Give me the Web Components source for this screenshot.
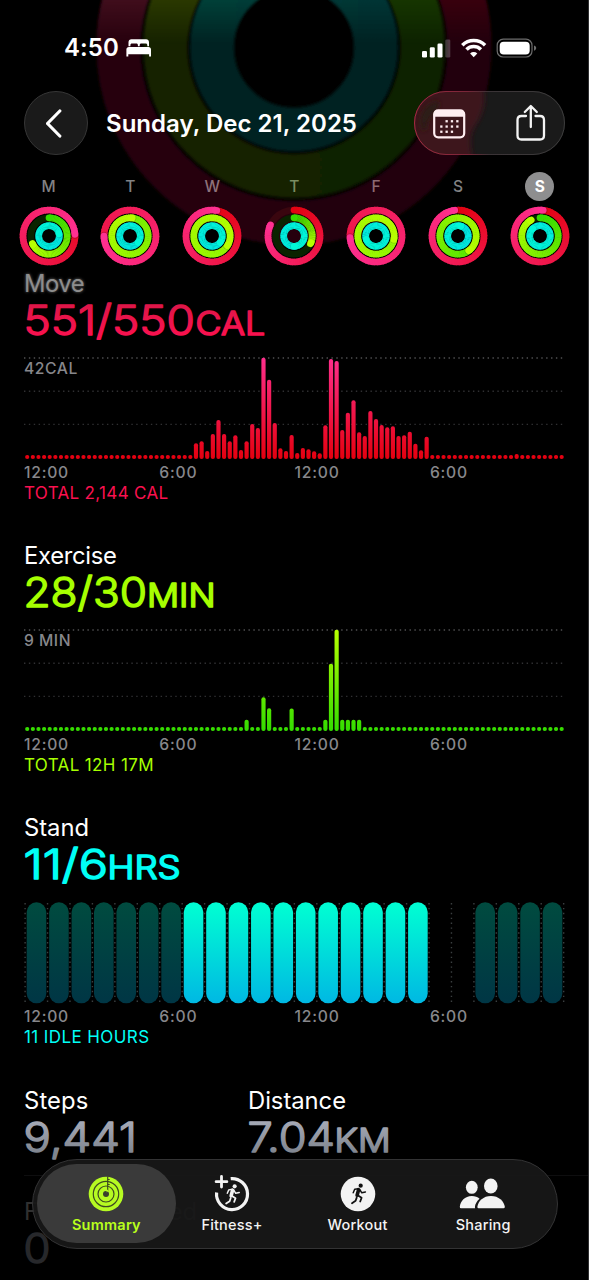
<!DOCTYPE html>
<html lang="en">
<head>
<meta charset="utf-8">
<title>Activity</title>
<style>
    body {
        margin: 0;
        background: #000;
        font-family: Inter, "Liberation Sans", sans-serif;
        color: #fff;
    }
</style>
</head>
<body>
<activity-screen>
    <hero-rings slot="backdrop"></hero-rings>
    <status-bar time="4:50"></status-bar>
    <day-header><fit-text width="251">Sunday, Dec 21, 2025</fit-text></day-header>
    <week-strip></week-strip>
    <activity-metric kind="move" label="Move" label-width="60"></activity-metric>
    <activity-metric kind="exercise" label="Exercise" label-width="92.500"></activity-metric>
    <activity-metric kind="stand" label="Stand" label-width="65"></activity-metric>
    <stat-row></stat-row>
    <tab-bar slot="overlay">
        <tab-item icon="rings" selected><fit-text width="69">Summary</fit-text></tab-item>
        <tab-item icon="plus"><fit-text width="61">Fitness+</fit-text></tab-item>
        <tab-item icon="run"><fit-text width="60">Workout</fit-text></tab-item>
        <tab-item icon="people"><fit-text width="55">Sharing</fit-text></tab-item>
    </tab-bar>
</activity-screen>

<script>
class ActivityScreen extends HTMLElement {
    constructor() {
        super();
        this.attachShadow({ mode: 'open' });
        this.shadowRoot.innerHTML = `
            <style>
                :host {
                    display: block;
                    position: relative;
                    width: 589px;
                    height: 1280px;
                    overflow: hidden;
                    background: #000;
                }
                main {
                    position: relative;
                    display: flex;
                    flex-direction: column;
                }
                .edge {
                    position: absolute;
                    right: 0;
                    top: 0;
                    width: 1px;
                    height: 100%;
                    background: #303032;
                }
            </style>
            <slot name="backdrop"></slot>
            <main><slot></slot></main>
            <slot name="overlay"></slot>
            <div class="edge"></div>
        `;
    }
}

class HeroRings extends HTMLElement {
    constructor() {
        super();
        this.attachShadow({ mode: 'open' });
        this.shadowRoot.innerHTML = `
            <style>
                :host { display: block; position: absolute; left: 0; top: 0; }
                svg { display: block; }
            </style>
            <svg width="589" height="260" viewBox="0 0 589 260">
                <defs>
                    <filter id="soft" x="-20%" y="-20%" width="140%" height="140%"><feGaussianBlur stdDeviation="1.800"/></filter>
                    <linearGradient id="r"><stop offset=".2" stop-color="#270611"/><stop offset=".8" stop-color="#220308"/></linearGradient>
                    <linearGradient id="g"><stop offset=".2" stop-color="#182300"/><stop offset=".8" stop-color="#0e2200"/></linearGradient>
                    <linearGradient id="t"><stop offset="0" stop-color="#002420"/><stop offset="1" stop-color="#002121"/></linearGradient>
                    <linearGradient id="r2"><stop offset=".2" stop-color="#400b1d"/><stop offset=".8" stop-color="#38060f"/></linearGradient>
                    <linearGradient id="g2"><stop offset=".2" stop-color="#2b3900"/><stop offset=".8" stop-color="#133600"/></linearGradient>
                    <linearGradient id="t2"><stop offset="0" stop-color="#004037"/><stop offset="1" stop-color="#003536"/></linearGradient>
                    <linearGradient id="fade" x2="0" y2="1"><stop offset="0" stop-color="#fff"/><stop offset="1" stop-color="#000"/></linearGradient>
                    <mask id="top" maskUnits="userSpaceOnUse" x="0" y="0" width="589" height="260"><rect width="589" height="44" fill="url(#fade)"/></mask>
                </defs>
                <g fill="none" stroke-width="44" filter="url(#soft)">
                    <circle cx="294" cy="47.500" r="175.500" stroke="url(#r)"/>
                    <circle cx="294" cy="47.500" r="128.500" stroke="url(#g)"/>
                    <circle cx="294" cy="47.500" r="82" stroke="url(#t)"/>
                </g>
                <g mask="url(#top)">
                    <g fill="none" stroke-width="44" filter="url(#soft)">
                        <circle cx="294" cy="47.500" r="175.500" stroke="url(#r2)"/>
                        <circle cx="294" cy="47.500" r="128.500" stroke="url(#g2)"/>
                        <circle cx="294" cy="47.500" r="82" stroke="url(#t2)"/>
                    </g>
                </g>
            </svg>
        `;
    }
}

class StatusBar extends HTMLElement {
    connectedCallback() {
        this.attachShadow({ mode: 'open' });
        this.shadowRoot.innerHTML = `
            <style>
                :host {
                    display: flex;
                    box-sizing: border-box;
                    height: 91px;
                    padding: 33px 51px 0 64px;
                    justify-content: space-between;
                    font-size: 24px;
                    font-weight: 600;
                    line-height: 32px;
                }
                div { display: flex; gap: 6.500px; height: 30px; align-items: center; }
                svg { display: block; fill: #fff; }
            </style>
            <div>
                <fit-text width="55">${this.getAttribute('time')}</fit-text>
                <svg width="26" height="18" viewBox="0 0 26 18">
                    <path d="M2.500 7.300V3.200C2.500 1.200 3.700.2 5.400.2h14.700c1.700 0 2.900 1 2.900 3v4.100h-1.700V6c0-1-.7-1.600-1.600-1.600h-4.400c-1 0-1.600.6-1.600 1.600v1.300h-1.800V6c0-1-.6-1.600-1.600-1.600H6c-1 0-1.600.6-1.600 1.600v1.300z"/>
                    <path d="M.4 17.400V10.500c0-1.600 1-2.500 2.600-2.500h19.400c1.600 0 2.600.9 2.600 2.500v6.900h-1.900v-2.200H2.300v2.200z"/>
                </svg>
            </div>
            <svg width="118" height="20" viewBox="0 0 118 20" style="margin-top:4.500px">
                <rect x="2" y="13" width="5" height="6.500" rx="1.300"/>
                <rect x="9.800" y="9.300" width="5" height="10.200" rx="1.300"/>
                <rect x="17.500" y="5.400" width="5" height="14.100" rx="1.300"/>
                <rect x="25.300" y="1.500" width="5" height="18" rx="1.300" fill="#fff" fill-opacity=".22"/>
                <g fill="none" stroke="#fff" stroke-width="3.500">
                    <path d="M42.300 7.200a16.200 16.200 0 0 1 22.800 0"/>
                    <path d="M46.500 11.600a10.200 10.200 0 0 1 14.400 0"/>
                </g>
                <path d="M53.700 19.300l-3.600-3.700a5.100 5.100 0 0 1 7.200 0z"/>
                <rect x="77.200" y="1.200" width="34.800" height="17.800" rx="6" fill="none" stroke="#6d6d6d" stroke-width="1.200"/>
                <rect x="79.700" y="3.700" width="30" height="12.800" rx="4"/>
                <path d="M114 7.500c1.500.4 2.200 1.400 2.200 2.600s-.7 2.200-2.200 2.600z" fill="#6d6d6d"/>
            </svg>
        `;
    }
}

class DayHeader extends HTMLElement {
    constructor() {
        super();
        this.attachShadow({ mode: 'open' });
        this.shadowRoot.innerHTML = `
            <style>
                :host {
                    display: flex;
                    align-items: center;
                    height: 64px;
                    padding: 0 24px;
                    font-size: 24px;
                    font-weight: 600;
                    line-height: 30px;
                }
                svg { display: block; fill: none; stroke: #fff; }
                slot { display: block; padding-top: 2px; }
                .back {
                    box-sizing: border-box;
                    display: grid;
                    place-items: center;
                    width: 64px;
                    height: 64px;
                    border: 1px solid #363636;
                    border-radius: 50%;
                    background: #1a1a1a;
                    margin-right: 18px;
                }
                .actions {
                    margin-left: auto;
                    width: 151px;
                    height: 64px;
                }
            </style>
            <div class="back">
                <svg width="20" height="30" viewBox="0 0 20 30" stroke-width="3.200" stroke-linecap="round" stroke-linejoin="round"><path d="M13.800 3L1.500 15.500L13.800 28"/></svg>
            </div>
            <slot></slot>
            <div class="actions">
                <svg width="151" height="64" viewBox="0 0 151 64">
                    <defs>
                        <linearGradient id="rim"><stop offset="0" stop-color="#a52a40"/><stop offset=".35" stop-color="#792638"/><stop offset=".5" stop-color="#3a3336"/><stop offset="1" stop-color="#3c3c3c"/></linearGradient>
                        <clipPath id="pill"><rect width="151" height="64" rx="32"/></clipPath>
                        <filter id="haze" x="-20%" y="-20%" width="140%" height="140%"><feGaussianBlur stdDeviation="2.500"/></filter>
                    </defs>
                    <g clip-path="url(#pill)" stroke="none">
                        <rect width="151" height="64" fill="#1a1a1a"/>
                        <path d="M-10-10H66c8 14 4 32-5 45c-6 9-6 20 0 40H-10z" fill="#3c131c" filter="url(#haze)"/>
                        <path d="M7 37c-3-11 3-22 13-26c6-2 7 3 2 9c-5 6-9 9-9 15c0 5-5 6-6 2z" fill="#2b1c12" filter="url(#haze)"/>
                    </g>
                    <rect x=".5" y=".5" width="150" height="63" rx="31.500" stroke="url(#rim)"/>
                    <g stroke="#ffeef1" transform="translate(-.300 .300)">
                        <rect x="20.500" y="19" width="30" height="27" rx="4" stroke-width="2.200"/>
                        <path d="M20 25.500V23q0-4 4-4h23q4 0 4 4v2.500z" fill="#ffeef1" stroke="none"/>
                        <g fill="#ffeef1" stroke="none">
                            <rect x="31.800" y="28.800" width="2.300" height="2.300"/><rect x="37.100" y="28.800" width="2.300" height="2.300"/><rect x="42.500" y="28.800" width="2.300" height="2.300"/>
                            <rect x="26.500" y="34.100" width="2.300" height="2.300"/><rect x="31.800" y="34.100" width="2.300" height="2.300"/><rect x="37.100" y="34.100" width="2.300" height="2.300"/><rect x="42.500" y="34.100" width="2.300" height="2.300"/>
                            <rect x="26.500" y="39.300" width="2.300" height="2.300"/><rect x="31.800" y="39.300" width="2.300" height="2.300"/><rect x="37.100" y="39.300" width="2.300" height="2.300"/>
                        </g>
                    </g>
                    <g stroke="#f4f4f4" stroke-width="2.300" stroke-linecap="round" stroke-linejoin="round" transform="translate(-.500 0)">
                        <path d="M112.500 25H108q-4 0-4 4v15.500q0 4 4 4h18.500q4 0 4-4V29q0-4-4-4H122"/>
                        <path d="M117.300 36V15.500M111.300 21L117.300 15L123.300 21"/>
                    </g>
                </svg>
            </div>
        `;
    }
}

const RING_COLORS = [
    { from: [227, 3, 18], to: [255, 48, 146], track: '#3a060f' },
    { from: [52, 220, 0], to: [184, 255, 0], track: '#0a2300' },
    { from: [0, 226, 228], to: [0, 248, 216], track: '#002a2a' }
];

class ActivityRings extends HTMLElement {
    set data(values) {
        const c = 30;
        const radii = [26, 18.2, 10.3];
        const point = (r, t) => {
            const a = t * 2 * Math.PI;
            return `${(c + r * Math.sin(a)).toFixed(2)} ${(c - r * Math.cos(a)).toFixed(2)}`;
        };
        let parts = '';
        values.forEach((total, i) => {
            const r = radii[i];
            const { from, to, track } = RING_COLORS[i];
            const mix = k => `rgb(${from.map((v, n) => Math.round(v + (to[n] - v) * k)).join(',')})`;
            parts += `<circle cx="${c}" cy="${c}" r="${r}" stroke="${track}"/>`;
            // only the last turn is visible, earlier ones are covered
            const start = Math.max(0, total - 1);
            const steps = 60;
            const span = total - start;
            if (start === 0) {
                parts += `<path d="M${point(r, 0)}L${point(r, 0.001)}" stroke="${mix(0)}" stroke-linecap="round"/>`;
            }
            for (let s = 0; s < steps; s++) {
                const a = start + span * s / steps;
                const b = start + span * Math.min(steps, s + 1.3) / steps;
                parts += `<path d="M${point(r, a)}A${r} ${r} 0 0 1 ${point(r, b)}" stroke="${mix(a / total)}"/>`;
            }
            if (total > 0.95) {
                parts += `<path d="M${point(r, total)}L${point(r, total + 0.006)}" stroke="#000" stroke-opacity=".18" stroke-linecap="round"/>`;
            }
            parts += `<path d="M${point(r, total - 0.01)}L${point(r, total)}" stroke="${mix(1)}" stroke-linecap="round"/>`;
        });
        if (!this.shadowRoot) this.attachShadow({ mode: 'open' });
        this.shadowRoot.innerHTML = `
            <style>
                :host { display: block; }
                svg { display: block; }
            </style>
            <svg width="60" height="60" viewBox="0 0 60 60" fill="none" stroke-width="6.700">${parts}</svg>
        `;
    }
}

const WEEK = [
    { day: 'M', color: '#828284', rings: [1.24, 0.683, 1.22] },
    { day: 'T', color: '#828284', rings: [1.75, 2.02, 1.36] },
    { day: 'W', color: '#8d727a', rings: [1.03, 3.34, 1.36] },
    { day: 'T', color: '#7a8d61', rings: [0.82, 0.32, 1.5] },
    { day: 'F', color: '#8c6a72', rings: [1.74, 3.28, 1.7] },
    { day: 'S', color: '#828284', rings: [0.98, 1.4, 1.05] },
    { day: 'S', color: '#fff', rings: [1.02, 0.92, 1.88], today: true }
];

class WeekStrip extends HTMLElement {
    connectedCallback() {
        this.attachShadow({ mode: 'open' });
        this.shadowRoot.innerHTML = `
            <style>
                :host {
                    display: flex;
                    justify-content: space-between;
                    height: 98px;
                    padding: 16.700px 19px 0 18.500px;
                    font-size: 15.500px;
                    font-weight: 500;
                }
                .day {
                    display: flex;
                    flex-direction: column;
                    align-items: center;
                    gap: 5px;
                    width: 60px;
                }
                .letter {
                    width: 29px;
                    height: 29px;
                    line-height: 29px;
                    text-align: center;
                    border-radius: 50%;
                }
                .today { background: #8e8e8f; font-weight: 700; }
            </style>
            ${WEEK.map(d => `
                <div class="day">
                    <div class="letter ${d.today ? 'today' : ''}" style="color:${d.color}">${d.day}</div>
                    <activity-rings></activity-rings>
                </div>
            `).join('')}
        `;
        this.shadowRoot.querySelectorAll('activity-rings').forEach((el, i) => {
            el.data = WEEK[i].rings;
        });
    }
}

// Large rounded figure with a smaller unit after it.
class MetricValue extends HTMLElement {
    connectedCallback() {
        const a = name => this.getAttribute(name);
        const unit = a('unit')
            ? `<text x="${a('unit-x')}" y="36.500" font-size="32" font-weight="300" stroke-width="1.700" textLength="${a('unit-width')}" lengthAdjust="spacingAndGlyphs">${a('unit')}</text>`
            : '';
        this.attachShadow({ mode: 'open' });
        this.shadowRoot.innerHTML = `
            <style>
                :host { display: block; height: 46px; }
                svg { display: block; overflow: visible; }
                text { stroke-linejoin: round; fill: url(#ink); stroke: url(#ink); }
            </style>
            <svg width="270" height="46" viewBox="0 0 270 46">
                <defs>
                    <linearGradient id="ink" gradientUnits="userSpaceOnUse" x1="0" y1="6" x2="0" y2="38">
                        <stop offset="0" stop-color="${a('top') || a('color')}"/>
                        <stop offset="1" stop-color="${a('color')}"/>
                    </linearGradient>
                </defs>
                <text x="-.500" y="36.500" font-size="41.500" font-weight="300" stroke-width="1.500" textLength="${a('value-width')}" lengthAdjust="spacingAndGlyphs">${a('value')}</text>
                ${unit}
            </svg>
        `;
    }
}

function spread(count, filled) {
    const list = new Array(count).fill(4);
    Object.keys(filled).forEach(start => {
        filled[start].forEach((h, i) => { list[Number(start) + i] = h; });
    });
    return list;
}

const METRICS = {
    move: {
        color: '#fa114f', top: '#dd1648', from: '#ff2f8d', to: '#e4000f',
        value: '551/550', valueWidth: 171.5, unit: 'CAL', unitX: 171.5, unitWidth: 69.5,
        scale: '42CAL', scaleWidth: 54, total: 'TOTAL 2,144 CAL', totalWidth: 144.5,
        bars: spread(96, {
            30: [15.7, 17.7, 8, 25, 39, 25, 17.7, 23.7, 9, 17.7, 35, 31, 101.3, 79.3, 36, 10.7, 8, 24, 6, 11, 9.7, 7.7, 5.7,
                33.7, 100, 98, 29, 46.3, 58.7, 26.7, 23, 48, 40, 34, 31.7, 32.7, 23, 23.7, 27.3, 15.3, 8.7, 22.3],
            87: [5]
        })
    },
    exercise: {
        color: '#a6ff00', from: '#b8ff00', to: '#33dc00',
        value: '28/30', valueWidth: 123.5, unit: 'MIN', unitX: 123, unitWidth: 68.5,
        scale: '9 MIN', scaleWidth: 47, total: 'TOTAL 12H 17M', totalWidth: 130,
        bars: spread(96, { 39: [11.3], 42: [33.7, 22.7], 47: [22.5], 53: [11.3, 67.3, 101.3, 11.3, 11.3, 11.3, 11.3] })
    },
    stand: {
        color: '#00fff6',
        value: '11/6', valueWidth: 84.5, unit: 'HRS', unitX: 83.5, unitWidth: 73,
        total: '11 IDLE HOURS', totalWidth: 125.5,
        hours: '000000011111111111--0000'
    }
};

class ActivityMetric extends HTMLElement {
    connectedCallback() {
        const kind = this.getAttribute('kind');
        const m = METRICS[kind];
        this.attachShadow({ mode: 'open' });
        this.shadowRoot.innerHTML = `
            <style>
                :host {
                    display: block;
                    box-sizing: border-box;
                    height: 272.300px;
                    padding: 0 24px;
                }
                .label {
                    height: 28px;
                    line-height: 28px;
                    font-size: 23.800px;
                }
                :host([kind="move"]) .label {
                    color: #8d8d8d;
                    text-shadow: 0 0 3px rgba(255, 255, 255, .45);
                }
                .chart { position: relative; margin-top: 13px; height: 102px; }
                .chart svg { display: block; }
                .scale {
                    position: absolute;
                    left: 0;
                    top: 2px;
                    line-height: 20px;
                }
                .scale, .axis { font-size: 15.700px; font-weight: 550; color: #87878b; }
                .axis {
                    display: grid;
                    grid-template-columns: repeat(4, 135.300px);
                    margin-top: 4px;
                    line-height: 20px;
                }
                .total {
                    font-size: 17px;
                    line-height: 20px;
                    color: ${m.color};
                }
            </style>
            <div class="label"><fit-text width="${this.getAttribute('label-width')}">${this.getAttribute('label')}</fit-text></div>
            <metric-value value="${m.value}" value-width="${m.valueWidth}" unit="${m.unit}" unit-x="${m.unitX}"
                unit-width="${m.unitWidth}" color="${m.color}" top="${m.top || m.color}"></metric-value>
            <div class="chart">
                ${m.hours ? this.hourChart(m) : this.barChart(m)}
                ${m.scale ? `<div class="scale"><fit-text width="${m.scaleWidth}">${m.scale}</fit-text></div>` : ''}
            </div>
            <div class="axis">
                <span><fit-text width="45">12:00</fit-text></span>
                <span><fit-text width="38">6:00</fit-text></span>
                <span><fit-text width="45">12:00</fit-text></span>
                <span><fit-text width="38">6:00</fit-text></span>
            </div>
            <div class="total"><fit-text width="${m.totalWidth}">${m.total}</fit-text></div>
        `;
    }

    barChart(m) {
        const lines = [[1, '#505052'], [34.2, '#303032'], [67.4, '#303032']].map(([y, c]) =>
            `<path d="M0 ${y}H541" stroke="${c}" stroke-width="1.400" stroke-dasharray="1.400 3.480"/>`).join('');
        const bars = m.bars.map((h, i) =>
            `<rect x="${(1.1 + i * 5.626).toFixed(2)}" y="${(102 - h).toFixed(1)}" width="4.200" height="${h}" rx="2"/>`).join('');
        return `
            <svg width="541" height="102" viewBox="0 0 541 102">
                <defs>
                    <linearGradient id="bars" gradientUnits="userSpaceOnUse" x1="0" y1="0" x2="0" y2="102">
                        <stop offset="0" stop-color="${m.from}"/><stop offset="1" stop-color="${m.to}"/>
                    </linearGradient>
                    <mask id="shape"><g fill="#fff">${bars}</g></mask>
                </defs>
                ${lines}
                <rect width="541" height="102" fill="url(#bars)" mask="url(#shape)"/>
            </svg>
        `;
    }

    hourChart(m) {
        let parts = '';
        for (let i = 0; i <= 24; i++) {
            const x = (1.1 + i * 22.44).toFixed(2);
            parts += `<path d="M${x} 2V102" stroke="#3a3f40" stroke-width="1.400" stroke-dasharray="1.400 3.480"/>`;
        }
        m.hours.split('').forEach((h, i) => {
            if (h === '-') return;
            parts += `<rect x="${(2.7 + i * 22.435).toFixed(2)}" y="1.300" width="19.600" height="101" rx="9.800" fill="url(#${h === '1' ? 'on' : 'off'})"/>`;
        });
        return `
            <svg width="541" height="102" viewBox="0 0 541 102" overflow="visible">
                <defs>
                    <linearGradient id="on" x2="0" y2="1"><stop offset="0.050" stop-color="#00fcd3"/><stop offset="1" stop-color="#00b8e3"/></linearGradient>
                    <linearGradient id="off" x2="0" y2="1"><stop offset="0" stop-color="#004b3f"/><stop offset="1" stop-color="#003645"/></linearGradient>
                </defs>
                ${parts}
            </svg>
        `;
    }
}

class StatRow extends HTMLElement {
    connectedCallback() {
        this.attachShadow({ mode: 'open' });
        this.shadowRoot.innerHTML = `
            <style>
                :host { display: block; padding-left: 24px; padding-top: .500px; font-size: 23.800px; line-height: 28px; }
                fit-text { height: 28px; }
                .pair { display: grid; grid-template-columns: 224px 1fr; height: 88px; }
                .next { border-top: 1px solid #0e0e0f; padding-top: 22px; color: #303030; }
            </style>
            <div class="pair">
                <div>
                    <fit-text width="64.500">Steps</fit-text>
                    <metric-value value="9,441" value-width="113.500" color="#7f858f" top="#a6aab6"></metric-value>
                </div>
                <div>
                    <fit-text width="98">Distance</fit-text>
                    <metric-value value="7.04" value-width="87.500" unit="KM" unit-x="86.500" unit-width="56" color="#7f858f" top="#a6aab6"></metric-value>
                </div>
            </div>
            <div class="next">
                <fit-text width="173">Flights Climbed</fit-text>
                <metric-value value="0" value-width="27" color="#27282b"></metric-value>
            </div>
        `;
    }
}

class TabBar extends HTMLElement {
    constructor() {
        super();
        this.attachShadow({ mode: 'open' });
        this.shadowRoot.innerHTML = `
            <style>
                :host {
                    position: absolute;
                    left: 32px;
                    top: 1158.500px;
                    box-sizing: border-box;
                    display: grid;
                    grid-template-columns: repeat(4, 125.600px);
                    width: 526px;
                    height: 90px;
                    padding: 4.500px 10.600px;
                    border: 1px solid #333334;
                    border-radius: 45px;
                    background: rgba(24, 24, 24, .93);
                }
            </style>
            <slot></slot>
        `;
    }
}

const RUNNER = `
    <circle cx="2.700" cy="-8.300" r="2.100" stroke="none"/>
    <g fill="none" stroke-linecap="round" stroke-linejoin="round">
        <path d="M0.600-4.300L-0.900 1.200" stroke-width="3.600"/>
        <path d="M0.500-5.300L-3.300-4.700L-4.800-1.300" stroke-width="1.500"/>
        <path d="M1.800-4.400L3.800-1.200L7.400-2" stroke-width="1.500"/>
        <path d="M-0.300 1.300L3.600 3.800L2.200 7.500" stroke-width="1.800"/>
        <path d="M-1.300 3.600L-2.400 6.800L-6 9.200" stroke-width="1.800"/>
    </g>`;

const TAB_ICONS = {
    rings: `
        <circle r="17.300" fill="#b6fb22"/>
        <g fill="none" stroke="#3d4a20" stroke-width="1.200">
            <circle r="12.700"/><circle r="8"/>
            <path d="M1.700-17.500V-3" stroke-width="1.200"/>
            <path d="M1.700-14.500h2M1.700-9.500h2" stroke-width="1"/>
        </g>
        <circle r="3" fill="#3a3f2d"/>
        <path d="M.300-4.800L2.600-3.800L.800-1.600z" fill="#b6fb22"/>`,
    plus: `
        <path d="M-1.300-15.400A15.500 15.500 0 1 1-15.400-1.500" fill="none" stroke-width="3.200" stroke-linecap="butt"/>
        <path d="M-10.500-17.600v10.600M-15.900-12.300h10.800" stroke-width="2.800" stroke-linecap="round"/>
        <g transform="translate(0 .500) scale(.980)">${RUNNER}</g>`,
    run: `<circle r="17.300" stroke="none"/><g fill="#111" stroke="#111">${RUNNER}</g>`,
    people: `
        <g stroke="none" transform="translate(-24.200 -17)">
            <ellipse cx="13" cy="10.300" rx="5.900" ry="6.500"/>
            <ellipse cx="32" cy="9" rx="6.800" ry="7.400"/>
            <path d="M2.200 31.300q-1.300 0-1.200-1.500C1.600 24.200 6 19 13 19c3.200 0 5.900 1 7.800 2.700c-2.700 2.300-4.500 5.300-4.700 8.300l.2 1.300z"/>
            <path d="M19.800 31.300q-1.300 0-1.200-1.500C19.300 24 24.600 19 32.200 19s13 5 13.800 10.800q.1 1.500-1.300 1.500z"/>
        </g>`
};

class TabItem extends HTMLElement {
    connectedCallback() {
        this.attachShadow({ mode: 'open' });
        this.shadowRoot.innerHTML = `
            <style>
                :host {
                    display: flex;
                    flex-direction: column;
                    align-items: center;
                    box-sizing: border-box;
                    height: 79px;
                    padding-top: 11.500px;
                    gap: 4px;
                    border-radius: 40px;
                    font-size: 14.500px;
                    font-weight: 500;
                    line-height: 18px;
                    color: #f3f3f3;
                }
                :host([selected]) {
                    margin: 0 -7px;
                    background: rgba(60, 60, 60, .95);
                    color: #b9ff1c;
                    font-weight: 600;
                }
                svg { display: block; fill: #f3f3f3; stroke: #f3f3f3; overflow: visible; }
                :host([selected]) svg { stroke: none; }
            </style>
            <svg width="48" height="36" viewBox="-24 -18 48 36">${TAB_ICONS[this.getAttribute('icon')]}</svg>
            <slot></slot>
        `;
    }
}

// Text tracked out or in so that it fills the given width.
class FitText extends HTMLElement {
    connectedCallback() {
        if (this.shadowRoot) return;
        this.attachShadow({ mode: 'open' });
        this.shadowRoot.innerHTML = `
            <style>
                :host { display: inline-block; white-space: nowrap; vertical-align: top; }
            </style>
            <slot></slot>
        `;
        const natural = this.getBoundingClientRect().width;
        const gap = (Number(this.getAttribute('width')) - natural) / this.textContent.length;
        this.style.letterSpacing = `${gap.toFixed(3)}px`;
    }
}

customElements.define('activity-screen', ActivityScreen);
customElements.define('hero-rings', HeroRings);
customElements.define('status-bar', StatusBar);
customElements.define('day-header', DayHeader);
customElements.define('activity-rings', ActivityRings);
customElements.define('week-strip', WeekStrip);
customElements.define('metric-value', MetricValue);
customElements.define('activity-metric', ActivityMetric);
customElements.define('stat-row', StatRow);
customElements.define('tab-bar', TabBar);
customElements.define('tab-item', TabItem);
// last, so every host already has its font when the text is measured
customElements.define('fit-text', FitText);
</script>
</body>
</html>
